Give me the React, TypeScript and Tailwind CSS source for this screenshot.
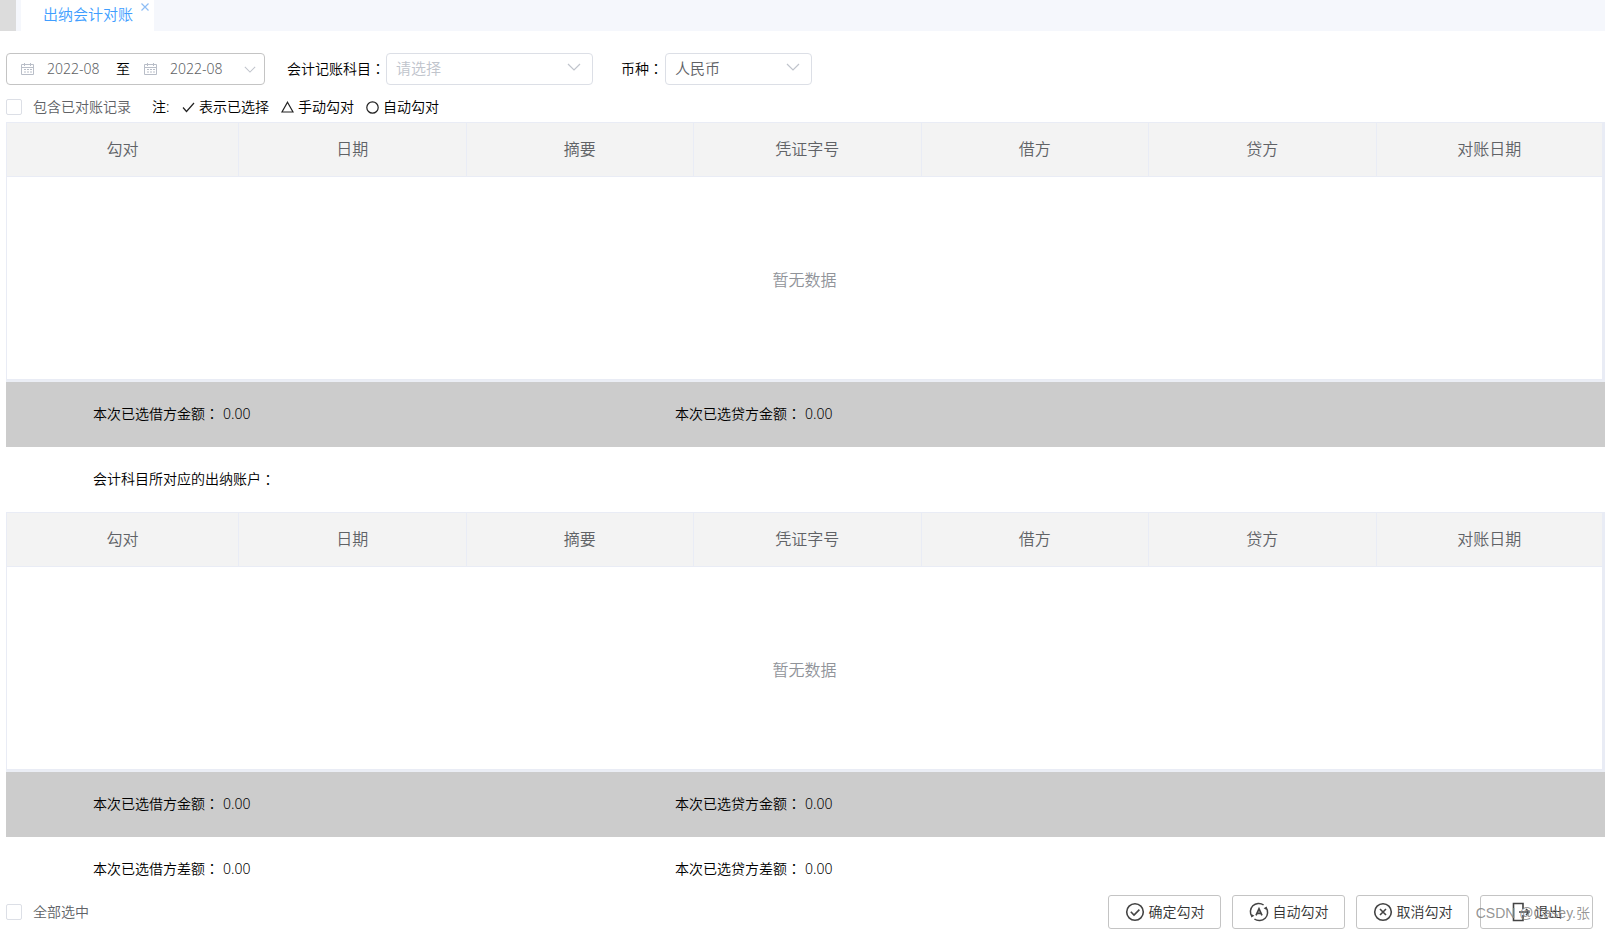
import type { ReactNode } from "react";

const columns = ["勾对", "日期", "摘要", "凭证字号", "借方", "贷方", "对账日期"];

function CalendarIcon() {
  return (
    <svg className="h-[14px] w-[14px] shrink-0 text-[#b9bec8]" viewBox="0 0 14 14" fill="none" stroke="currentColor">
      <path d="M.5 2.5h12v10H.5zM.5 5.5h12M3.5 1v3M9.5 1v3" />
      <path d="M3 7.5h2M6 7.5h2M9 7.5h2M3 10h2M6 10h2M9 10h2" />
    </svg>
  );
}

function ChevronIcon({ className }: { className: string }) {
  return (
    <svg className={className} viewBox="0 0 14 8" fill="none" stroke="currentColor" strokeWidth="1.2">
      <path d="M1 1l6 6 6-6" />
    </svg>
  );
}

function CheckCircleIcon() {
  return (
    <svg className="h-5 w-5" viewBox="0 0 20 20" fill="none" stroke="#444" strokeWidth="1.6">
      <circle cx="10" cy="10" r="8.3" />
      <path d="M5.8 9.8l3.2 3.2 5.4-5.4" />
    </svg>
  );
}

function AutoIcon() {
  return (
    <svg className="h-5 w-5" viewBox="0 0 20 20" fill="none" stroke="#444" strokeWidth="1.5">
      <path d="M3 14.6A8.3 8.3 0 0 1 14.6 3" />
      <path d="M17 5.4A8.3 8.3 0 0 1 5.4 17" />
      <path d="M17.8 4.6l-.2 3.4-3-1.8zM2.2 15.4l.2-3.4 3 1.8z" fill="#444" stroke="none" />
      <path d="M7 13.4L10 6.8l3 6.6M8 11.3h4" strokeWidth="1.7" />
    </svg>
  );
}

function CancelIcon() {
  return (
    <svg className="h-5 w-5" viewBox="0 0 20 20" fill="none" stroke="#444" strokeWidth="1.6">
      <circle cx="10" cy="10" r="8.3" />
      <path d="M7 7l6 6M13 7l-6 6" />
    </svg>
  );
}

function ExitIcon() {
  return (
    <svg className="h-5 w-5" viewBox="0 0 20 20" fill="none" stroke="#444" strokeWidth="1.6">
      <path d="M12 7V1.5H2.5v17H12V13" />
      <path d="M8 10h10M15 7l3 3-3 3" />
    </svg>
  );
}

// full-width colon, centred in its box
function Colon() {
  return <span className="font-['Noto_Sans_CJK_TC',sans-serif] leading-none">：</span>;
}

function Checkbox({ label }: { label: string }) {
  return (
    <label className="flex items-center gap-[11px] text-[#606266]">
      <input type="checkbox" className="h-4 w-4 appearance-none rounded-[2px] border border-[#dcdfe6] bg-white checked:bg-[#409eff]" />
      {label}
    </label>
  );
}

function DataTable() {
  return (
    <div className="h-[260px] border-b-2 border-[#ebeef5]">
      <table className="w-full table-fixed border-collapse border border-r-[3px] border-[#e9ecf5] text-base">
        <colgroup>
          <col className="w-[232px]" />
        </colgroup>
        <thead>
          <tr className="h-[54px] bg-[#f3f3f3] text-[#606266]">
            {columns.map((name) => (
              <th key={name} className="border border-[#e9ecf5] pb-[2px] font-[350]">
                {name}
              </th>
            ))}
          </tr>
        </thead>
        <tbody>
          <tr className="h-[203px]">
            <td colSpan={columns.length} className="pt-1 text-center text-[#909399]">
              暂无数据
            </td>
          </tr>
        </tbody>
      </table>
    </div>
  );
}

function Totals({ debit, credit, className = "" }: { debit: string; credit: string; className?: string }) {
  return (
    <div className={`flex h-[65px] items-center pb-[2px] pl-[87px] ${className}`}>
      <div className="w-[38.5%]">
        {debit}
        <Colon />
        <span className="ml-1">0.00</span>
      </div>
      <div>
        {credit}
        <Colon />
        <span className="ml-1">0.00</span>
      </div>
    </div>
  );
}

function ActionButton({ icon, children }: { icon: ReactNode; children: ReactNode }) {
  return (
    <button className="flex h-[34px] w-[113px] items-center justify-center gap-1 rounded-[3px] border border-[#c4c4c4] bg-white text-[#333]">
      {icon}
      {children}
    </button>
  );
}

export default function App() {
  return (
    <div className="bg-white font-['Noto_Sans','Noto_Sans_CJK_SC',sans-serif] text-sm font-[350] text-black">
      <nav className="flex h-[31px] bg-[#f5f7fc]">
        <div className="mr-[5px] w-4 bg-[#dcdcdc]" />
        <div className="flex w-[133px] justify-end bg-white pr-[5px]">
          <a href="#" className="text-[15px] leading-[29px] text-[#409eff]">
            出纳会计对账
          </a>
          <button aria-label="关闭" className="ml-2 h-[14px] text-[#8ebdf5]">
            <svg className="h-2 w-2" viewBox="0 0 8 8" fill="none" stroke="currentColor" strokeWidth="1.2">
              <path d="M.5.5l7 7M7.5.5l-7 7" />
            </svg>
          </button>
        </div>
      </nav>

      <main className="pl-[6px] pt-[22px]">
        <div className="flex h-8 items-center">
          <div className="flex h-8 w-[259px] items-center rounded border border-[#c4c4c4] pl-[14px] pr-2 text-[#606266]">
            <CalendarIcon />
            <input aria-label="开始月份" defaultValue="2022-08" className="ml-3 w-[69px] outline-none" />
            <span className="w-7 text-black">至</span>
            <CalendarIcon />
            <input aria-label="结束月份" defaultValue="2022-08" className="ml-3 w-[74px] outline-none" />
            <ChevronIcon className="h-[7px] w-[12px] text-[#c0c4cc]" />
          </div>

          <label htmlFor="subject" className="ml-[22px] w-[99px]">
            会计记账科目
            <Colon />
          </label>
          <div className="relative">
            <select id="subject" className="h-8 w-[207px] appearance-none rounded border border-[#dcdfe6] bg-white px-[9px] text-[15px] text-[#c0c4cc]">
              <option>请选择</option>
            </select>
            <ChevronIcon className="pointer-events-none absolute right-3 top-[10px] h-[8px] w-[14px] text-[#c0c4cc]" />
          </div>

          <label htmlFor="currency" className="ml-7 w-11">
            币种
            <Colon />
          </label>
          <div className="relative">
            <select id="currency" className="h-8 w-[147px] appearance-none rounded border border-[#dcdfe6] bg-white px-[9px] text-[15px] text-[#606266]">
              <option>人民币</option>
            </select>
            <ChevronIcon className="pointer-events-none absolute right-3 top-[10px] h-[8px] w-[14px] text-[#c0c4cc]" />
          </div>
        </div>

        <div className="flex h-[37px] items-center pt-[7px]">
          <Checkbox label="包含已对账记录" />
          <span className="ml-[21px] w-[30px]">注:</span>
          <span className="flex items-center gap-1">
            <svg className="h-3 w-[13px]" viewBox="0 0 13 12" fill="none" stroke="#222" strokeWidth="1.2">
              <path d="M1 6.5l3.5 4L12 2" />
            </svg>
            表示已选择
          </span>
          <span className="ml-3 flex items-center gap-1">
            <svg className="h-3 w-[13px]" viewBox="0 0 13 12" fill="none" stroke="#222" strokeWidth="1.2">
              <path d="M6.5 1.2L12 11H1z" />
            </svg>
            手动勾对
          </span>
          <span className="ml-3 flex items-center gap-1">
            <svg className="h-[13px] w-[13px]" viewBox="0 0 13 13" fill="none" stroke="#222" strokeWidth="1.2">
              <circle cx="6.5" cy="6.5" r="5.7" />
            </svg>
            自动勾对
          </span>
        </div>

        <DataTable />
        <Totals debit="本次已选借方金额" credit="本次已选贷方金额" className="bg-[#ccc]" />
        <div className="flex h-[65px] items-center pb-[2px] pl-[87px]">
          会计科目所对应的出纳账户
          <Colon />
        </div>

        <DataTable />
        <Totals debit="本次已选借方金额" credit="本次已选贷方金额" className="bg-[#ccc]" />
        <Totals debit="本次已选借方差额" credit="本次已选贷方差额" />

        <div className="-mt-[7px] flex h-[34px] items-center justify-between pr-3">
          <Checkbox label="全部选中" />
          <div className="flex gap-[11px]">
            <ActionButton icon={<CheckCircleIcon />}>确定勾对</ActionButton>
            <ActionButton icon={<AutoIcon />}>自动勾对</ActionButton>
            <ActionButton icon={<CancelIcon />}>取消勾对</ActionButton>
            <div className="relative">
              <ActionButton icon={<ExitIcon />}>退出</ActionButton>
              <span className="pointer-events-none absolute right-[3px] top-[6px] whitespace-nowrap font-['Liberation_Sans','Noto_Sans_CJK_SC',sans-serif] text-sm leading-6 text-[#888]/90">
                CSDN @Casey.张
              </span>
            </div>
          </div>
        </div>
      </main>
    </div>
  );
}
